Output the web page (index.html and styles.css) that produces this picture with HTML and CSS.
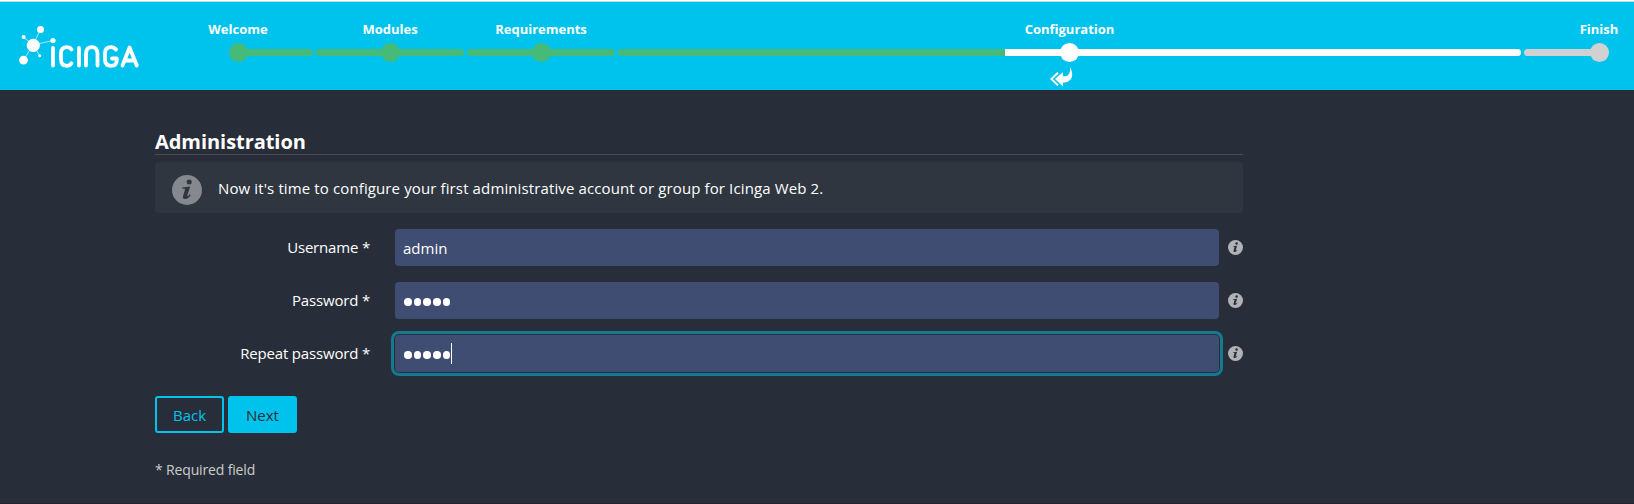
FILE: index.html
```html
<!DOCTYPE html>
<html lang="en">
<head>
<meta charset="utf-8">
<title>Icinga Web 2 Setup</title>
<link rel="stylesheet" href="styles.css">
</head>
<body>
<svg class="defs" width="0" height="0" aria-hidden="true">
  <symbol id="info" viewBox="0 0 30 30">
    <circle cx="15" cy="15" r="15"/>
    <circle class="glyph" cx="17.2" cy="7" r="2.5"/>
    <path class="glyph" d="M10 12.4 L18.2 11.4 L15.3 20.4 Q15 21.6 15.8 21.2 Q16.7 20.7 17.6 19.3 L18.8 20 Q16.5 24 13.2 24 Q10.2 24 11.1 20.8 L13 14.4 Q13.1 13.6 12.2 13.6 L10 13.6 Z"/>
  </symbol>
</svg>
<header class="header">
  <svg class="logo" width="121" height="44" viewBox="0 0 121 44">
    <g class="links"><path d="M14 19 L21.5 3.5 M14 19 L4.5 11 M14 19 L34 14.5 M14 19 L4.5 34 M14 19 L21 30"/></g>
    <g class="nodes"><circle cx="14.3" cy="19.3" r="6.6"/><circle cx="21.5" cy="3.6" r="3.5"/><circle cx="4.6" cy="11" r="2"/><circle cx="34" cy="14.6" r="2.6"/><circle cx="4.5" cy="34.2" r="4.4"/><circle cx="20.7" cy="29.8" r="1.5"/></g>
    <g class="word"><path d="M34 22 V39.5 M52.5 23.5 Q51 21.2 48 21.2 Q42 21.2 42 27.5 V33.5 Q42 39.8 48 39.8 Q51 39.8 52.5 37.3 M60 22 V39.5 M67 39.5 V28 Q67 21.2 72.8 21.2 Q78.5 21.2 78.5 28 V39.5 M97 23.5 Q95.2 21.2 92 21.2 Q86 21.2 86 27.5 V33.5 Q86 39.8 92 39.8 Q97.8 39.8 97.8 34 V32.5 H93 M103.5 39.5 L110.6 21.5 L117.8 39.5 M106 34.5 H115.5"/></g>
  </svg>
  <ol class="steps">
    <li class="step first done"><span class="name">Welcome</span><span class="track"><i class="bar"></i><i class="dot"></i></span></li>
    <li class="step done"><span class="name">Modules</span><span class="track"><i class="bar"></i><i class="dot"></i></span></li>
    <li class="step done"><span class="name">Requirements</span><span class="track"><i class="bar"></i><i class="dot"></i></span></li>
    <li class="step active"><span class="name">Configuration</span><span class="track"><i class="bar"></i><i class="dot"></i></span>
      <svg class="reply" width="23" height="20" viewBox="0 0 23 20"><path d="M20 0 C24.5 8 22 15.5 13 15.5 V19.5 L5 12 L13 5 V9.3 C18 9.5 20.5 7 20 0 Z"/><path class="chevron" d="M8 5.8 L1.4 12 L8 18.4"/></svg>
    </li>
    <li class="step last"><span class="name">Finish</span><span class="track"><i class="bar"></i><i class="dot"></i></span></li>
  </ol>
</header>
<main class="content">
  <h1 class="title">Administration</h1>
  <div class="notice"><svg class="notice-icon"><use href="#info"/></svg><p class="notice-text">Now it's time to configure your first administrative account or group for Icinga Web 2.</p></div>
  <form class="form">
    <div class="row"><label class="label">Username *</label><div class="input">admin</div><svg class="hint"><use href="#info"/></svg></div>
    <div class="row"><label class="label">Password *</label><div class="input secret"><i></i><i></i><i></i><i></i><i></i></div><svg class="hint"><use href="#info"/></svg></div>
    <div class="row"><label class="label">Repeat password *</label><div class="input secret focused"><i></i><i></i><i></i><i></i><i></i><b class="caret"></b></div><svg class="hint"><use href="#info"/></svg></div>
    <div class="buttons"><button type="button" class="button">Back</button><button type="button" class="button primary">Next</button></div>
  </form>
  <p class="required">* Required field</p>
</main>
</body>
</html>
```
FILE: styles.css
```css
* { box-sizing: border-box; }
body { margin: 0; height: 504px; overflow: hidden; border-bottom: 1px solid #282237; background: #282e39; color: #fff; font-family: "Open Sans", "Noto Sans", sans-serif; font-size: 15px; line-height: 20px; }
.defs { display: block; }
.header { display: flex; height: 90px; border-top: 1px solid #fff; background: #00c3ed; box-shadow: inset 0 1px #c5dce3; }
.logo { margin: 25px 0 0 19px; flex: none; }
.links { stroke: #fff; stroke-width: .8; opacity: .8; }
.nodes { fill: #fff; }
.word { fill: none; stroke: #fff; stroke-width: 3.8; stroke-linecap: round; stroke-linejoin: round; }
.steps { display: grid; grid-template-columns: 150px 148px 148px 903px 150px; column-gap: 3px; margin: 18px 0 0 23px; padding: 0; list-style: none; height: 71px; }
.step { display: flex; flex-direction: column; align-items: center; --c: #46bb79; --from: #46bb79; }
.name { height: 20px; font-size: 13px; font-weight: 700; white-space: nowrap; }
.track { display: grid; align-items: center; justify-items: center; width: 100%; height: 19px; margin-top: 4px; }
.bar, .dot { grid-area: 1 / 1; }
.bar { width: 100%; height: 7px; border-radius: 3.5px; background: linear-gradient(90deg, var(--from) 387px, var(--c) 387px); }
.dot { width: 19px; height: 19px; border-radius: 50%; background: var(--c); }
.first .bar { width: 50%; justify-self: end; }
.last .bar { width: 50%; justify-self: start; }
.active { --c: #fff; }
.last { --c: #d1d1d1; --from: #d1d1d1; }
.reply { margin: 5px 17px 0 0; fill: #fff; }
.chevron { fill: none; stroke: #fff; stroke-width: 2; }
.content { width: 1088px; margin: 38px 0 0 155px; }
.title { margin: 0; height: 27px; border-bottom: 1px solid #4b4b4d; font-size: 20px; line-height: 28px; font-weight: 700; letter-spacing: -0.05px; }
.notice { display: flex; align-items: center; height: 51px; margin-top: 7px; padding: 0 17px; gap: 16px; border-radius: 4px; background: #30363f; }
.notice-icon { --glyph: #30363f; width: 30px; height: 30px; margin-top: 4px; fill: #85888e; }
.glyph { fill: var(--glyph, #282e39); }
.notice-text { margin: 0; white-space: nowrap; letter-spacing: 0.12px; }
.form { display: flex; flex-direction: column; gap: 16px; margin-top: 16px; }
.row { display: flex; align-items: center; height: 37px; }
.label { width: 215px; margin-right: 25px; padding-bottom: 2px; text-align: right; white-space: nowrap; letter-spacing: -0.18px; }
.input { display: flex; align-items: center; width: 824px; height: 37px; padding: 0 8px; border-radius: 4px; background: #404d72; }
.secret { gap: 2.2px; padding: 3px 9px 0; }
.secret i { width: 7.5px; height: 7.5px; border-radius: 50%; background: #fff; }
.focused { box-shadow: 0 0 0 1px #282e39, 0 0 0 4px #147a92; }
.caret { width: 1px; height: 21px; margin: -4px 0 0 -1.7px; background: #fff; }
.hint { width: 15px; height: 15px; margin-left: 9px; fill: #b0b2b6; }
.buttons { display: flex; gap: 4px; margin-top: 8px; }
.button { width: 69px; height: 37px; padding: 0; border: 2px solid #00c3ed; border-radius: 3px; background: transparent; color: #00c3ed; font: inherit; }
.primary { background: #00c3ed; color: #282e39; }
.required { margin: 27px 0 0; font-size: 14px; letter-spacing: -0.15px; color: #cbccce; }
```
